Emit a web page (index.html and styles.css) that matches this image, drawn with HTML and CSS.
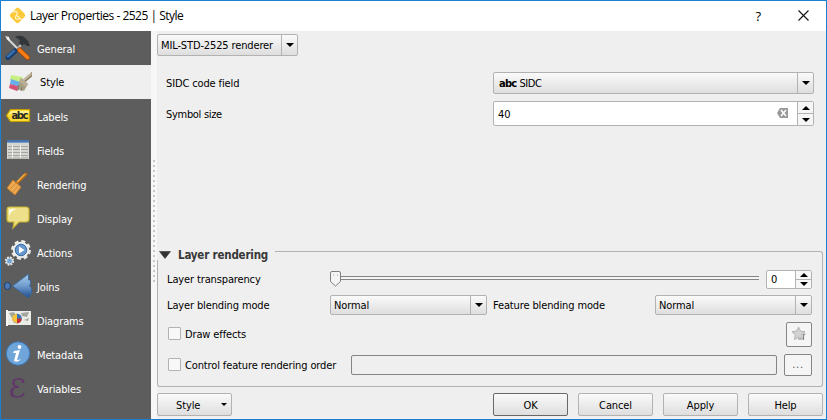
FILE: index.html
```
<!DOCTYPE html>
<html lang="en">
<head>
<meta charset="utf-8">
<title>Layer Properties</title>
<link rel="stylesheet" href="styles.css">
</head>
<body>
<div class="window">
  <header class="titlebar">
    <svg class="logo" width="17" height="17" viewBox="0 0 17 17"><path d="M8.500 0.500Q10 0.500 11 2L15.500 6.500Q17 8.500 15.500 10L10 15.500Q8.500 17 7 15.500L1.500 10Q0 8.500 1.500 7L7 1.500Z" fill="#fcc938"/><path d="M4 5.500Q5.500 3.500 8 5Q9 7 7 9Q5.500 11 7.500 12Q10 12.500 11.500 11M7 9Q9 8.500 10 10.500Q11.500 13 13.500 12" fill="none" stroke="#fff4d2" stroke-width="1.200"/></svg>
    <span class="caption">Layer Properties - 2525 | Style</span>
    <span class="help">?</span>
    <svg class="close" width="11" height="11" viewBox="0 0 11 11"><path d="M.5.500 10.500 10.500M10.500.5.500 10.500" stroke="#111" stroke-width="1.100"/></svg>
  </header>
  <div class="body">
    <nav class="sidebar">
      <div class="item"><svg viewBox="0 0 32 34"><path d="M7 7 18 18" stroke="#d5d8da" stroke-width="2"/><path d="m5 5 4 1 1 4-2-1z" fill="#eee"/><path d="M24 11 10 25" stroke="#b9c0c4" stroke-width="2.200"/><path d="M15 6Q20 3.500 24 6L28 10 30 15 27 15 24 13 22 15 19 12 20 9Z" fill="#30363a"/><path d="M15 20 8 26.500" stroke="#123b70" stroke-width="5" stroke-linecap="round"/><path d="M14 20 8 25.500" stroke="#366eaf" stroke-width="2.600" stroke-linecap="round"/><path d="m19.500 19 8 7.500" stroke="#a94500" stroke-width="5" stroke-linecap="round"/><path d="m19.500 19 8 7.500" stroke="#f77e17" stroke-width="3.400" stroke-linecap="round"/></svg><span>General</span></div>
      <div class="item selected"><svg viewBox="0 0 32 34"><path d="m11 10 12 2-2 7-11-4z" fill="#c9ef83"/><path d="m11 14 12 4-3 4-10-3z" fill="#65aeea"/><path d="m10 19 11 3-4 4-8-3z" fill="#d75278"/><path d="m24 16 8-7" stroke="#8c8065" stroke-width="3.600" stroke-linecap="round"/><path d="m24 15 7-6" stroke="#c7baa0" stroke-width="1.800" stroke-linecap="round"/><path d="m21 13 7 6-4 7-7-2z" fill="#a5a186"/><path d="m21 13 7 6-2 3-7-6z" fill="#b9ad95"/><path d="m19 20-1 5m4-3-1 4" stroke="#77745f"/></svg><span>Style</span></div>
      <div class="item"><svg viewBox="0 0 32 34"><path d="m6.500 16.500 4-6h19v12h-19z" fill="#f9dc37" stroke="#c69d00" stroke-width="1.200"/><path d="m8 16 3-4h18v3H10z" fill="#fff08b"/><text x="11.500" y="20" class="tagtext" textLength="17">abc</text></svg><span>Labels</span></div>
      <div class="item"><svg viewBox="0 0 32 34"><path d="M7 7h22v19H7z" fill="#d5d6d2"/><path d="M7 7h22v3H7z" fill="#4775b2"/><path d="M7 9h22v1H7z" fill="#749ccc"/><path d="M8 13.500h20M8 16.500h20M8 19.500h20M8 22.500h20M8 25h20" stroke="#a4a5a1"/><path d="M12.500 12v13M20.500 12v13" stroke="#eeeeea"/></svg><span>Fields</span></div>
      <div class="item"><svg viewBox="0 0 32 34"><path d="m17 16 9-9" stroke="#b86c16" stroke-width="3" stroke-linecap="round"/><path d="m17 15 8-8" stroke="#f1ab46" stroke-width="1.600"/><path d="m13 13 8 7-6 8-8-7z" fill="#eda94f" stroke="#c47a28"/><path d="m10 22 6-6m-3 9 6-7" stroke="#d18b3a"/></svg><span>Rendering</span></div>
      <div class="item"><svg viewBox="0 0 32 34"><path d="M9 6h17q3 0 3 3v9q0 3-3 3h-7l-6 6 1-6H9q-2 0-2-3V9q0-3 2-3z" fill="#eee08a" stroke="#c8b32f" stroke-width="1.200"/><path d="M9 15V9q2-2 8-1Q11 9 9 15z" fill="#fffbea"/></svg><span>Display</span></div>
      <div class="item"><svg viewBox="0 0 32 34"><circle cx="21" cy="15" r="8.700" fill="none" stroke="#e9e9e5" stroke-width="2.500" stroke-dasharray="4 2.830"/><circle cx="21" cy="15" r="7" fill="#6498cf" stroke="#eee" stroke-width="2.400"/><circle cx="21" cy="15" r="5.800" fill="none" stroke="#3769a2"/><path d="m19 11.500 5.500 3.500-5.500 3.500z" fill="#fff"/><circle cx="9.500" cy="26" r="3.800" fill="none" stroke="#eeeeea" stroke-width="1.700" stroke-dasharray="1.800 1.180"/><circle cx="9.500" cy="26" r="3" fill="#74a5d6" stroke="#e1e4e4"/></svg><span>Actions</span></div>
      <div class="item"><svg viewBox="0 0 32 34"><defs><linearGradient id="join" x2="0" y2="1"><stop stop-color="#aaceec"/><stop offset=".5" stop-color="#6f9bcd"/><stop offset="1" stop-color="#1e4b8c"/></linearGradient></defs><path d="m12.500 17 16-12v6h2v4l-1 2 2 2v5l-2 3-1 2z" fill="url(#join)" stroke="#31669f" stroke-width=".8"/><ellipse cx="7.500" cy="17" rx="3" ry="3.500" fill="#4d79b8" stroke="#174376"/></svg><span>Joins</span></div>
      <div class="item"><svg viewBox="0 0 32 34"><path d="M6 7h2v16H6z" fill="#f5f5f3"/><path d="M8 8h23v14H8z" fill="#ecece7"/><path d="m9 10 5-1 2 4-4 2zm12 0 8-1-2 5-5-1zm3 7 5-2-1 3z" fill="#a2a69f"/><circle cx="17" cy="15.500" r="4.800" fill="#3976b5"/><path d="M17 15.500V20.500q5-1 4.500-5z" fill="#cb2e2e"/><path d="M17 10.700v9.600q-5-1-5-5t5-4.600z" fill="#f4c53c"/></svg><span>Diagrams</span></div>
      <div class="item"><svg viewBox="0 0 32 34"><circle cx="18" cy="16.500" r="11.700" fill="#70a5da" stroke="#3779bd"/><circle cx="19.500" cy="10" r="1.900" fill="#fff"/><path d="m14 14 6-1-3 10q2 0 4-1-3 4-7 2l2-8-3 0z" fill="#fff"/></svg><span>Metadata</span></div>
      <div class="item"><svg viewBox="0 0 32 34"><path d="M23 10Q22 7.500 18 8q-5 .5-5 4t6 4q-8 0-8 5 0 5 6 5t7-4M14 9q-1 3 1 6m-2 3q-2 4 1 7" fill="none" stroke="#61366b" stroke-width="1.700"/><circle cx="23" cy="10.500" r="1.600" fill="#61366b"/></svg><span>Variables</span></div>
    </nav>
    <div class="splitter"><i class="dots"></i></div>
    <main class="panel">
      <div class="combo renderer"><span>MIL-STD-2525 renderer</span><b class="arrowbox"><i class="down"></i></b></div>
      <div class="row sidc"><label>SIDC code field</label><div class="combo"><strong>abc</strong><span>SIDC</span><b class="arrowbox"><i class="down"></i></b></div></div>
      <div class="row size"><label>Symbol size</label><div class="spin"><span>40</span><svg class="clear" width="11" height="10" viewBox="0 0 11 10"><path d="M3 0h8v10H3L0 5z" fill="#999"/><path d="m4 2 5 6m0-6L4 8" stroke="#fff" stroke-width="1.500"/></svg><b class="steps"><u><i class="up"></i></u><u><i class="down"></i></u></b></div></div>
      <section class="group">
        <h2><svg width="12" height="8" viewBox="0 0 12 8"><path d="M.5.500h11L6 7.500z" fill="#333" stroke="#222" stroke-width=".5"/></svg><span>Layer rendering</span></h2>
        <div class="frame">
          <div class="row transparency"><label>Layer transparency</label>
            <div class="slider"><svg class="thumb" width="12" height="16" viewBox="0 0 12 16"><path d="M2 .5h7q1.500 0 1.500 1.500v8.500l-5 4.500-5-4.500V2Q.5.500 2 .5z" fill="#f5f5f5" stroke="#808080"/><path d="M3 4h1m3 0h1" stroke="#aaa"/></svg></div>
            <div class="spin small"><span>0</span><b class="steps"><u><i class="up"></i></u><u><i class="down"></i></u></b></div>
          </div>
          <div class="row blending"><label class="layermode">Layer blending mode</label><div class="combo"><span>Normal</span><b class="arrowbox"><i class="down"></i></b></div><label class="featuremode">Feature blending mode</label><div class="combo"><span>Normal</span><b class="arrowbox"><i class="down"></i></b></div></div>
          <div class="row effects"><i class="check"></i><label>Draw effects</label><button class="tool star"><svg width="16" height="16" viewBox="0 0 16 16"><path d="m7.500 1 2 4.200 4.500.5-3.300 3.200.8 4.600-4-2.200-4 2.200.8-4.600L1 5.700l4.500-.5z" fill="#d2d2d2" stroke="#b4b4b4"/><path d="M12.500 8v6m0-4q0-2 2-2M7 13h3" fill="none" stroke="#888" stroke-width="1.200"/></svg></button></div>
          <div class="row order"><i class="check"></i><label>Control feature rendering order</label><div class="field"></div><button class="tool more">...</button></div>
        </div>
      </section>
      <footer class="buttons"><button class="menu"><span>Style</span><i class="down"></i></button><button class="default">OK</button><button>Cancel</button><button>Apply</button><button>Help</button></footer>
    </main>
  </div>
</div>
</body>
</html>
```
FILE: styles.css
```
* { box-sizing: border-box; }
body { margin: 0; font: 11px/14px "DejaVu Sans Condensed", "DejaVu Sans", sans-serif; font-stretch: condensed; letter-spacing: -.13px; color: #000; }
.window { width: 827px; height: 420px; border: 1px solid #1a80d3; background: #efefef; overflow: hidden; }
.titlebar { height: 30px; background: #fff; display: flex; align-items: center; padding: 0 17px 0 8px; }
.logo { margin-bottom: 2px; }
.caption { margin-left: 4px; font: 12px/16px "Open Sans", "Noto Sans", sans-serif; letter-spacing: -.5px; flex: 1; white-space: nowrap; }
.help { font: 13px/16px "Open Sans", sans-serif; margin-right: 37px; }
.close { margin-bottom: 2px; }
.body { display: flex; height: 388px; }
.sidebar { width: 150px; background: #5d5d5d; color: #fff; }
.item { height: 34px; display: flex; align-items: center; }
.item svg { width: 32px; height: 34px; margin-left: -1px; flex: none; }
.item span { margin: 3px 0 0 5px; }
.selected { background: #efefef; color: #000; }
.selected span { margin: 2px 0 0 8px; }
.tagtext { font: bold 10px "DejaVu Sans", sans-serif; fill: #292929; letter-spacing: 0; }
.splitter { width: 6px; background: #f7f7f7; padding: 129px 0 0 2px; }
.dots { display: block; width: 2px; height: 122px; background: repeating-linear-gradient(#c8c8c8 0 2px, transparent 2px 5px); }
.panel { width: 669px; padding-top: 3px; }
.combo, .spin { display: flex; align-items: center; border: 1px solid #b2b2b2; border-radius: 2px; background: linear-gradient(#fafafa, #dedede); padding-left: 3px; white-space: nowrap; }
.combo { height: 22px; }
.combo span, .spin span { flex: 1; padding-top: 2px; }
.combo strong { font: bold 10px/14px "DejaVu Sans", sans-serif; letter-spacing: -.8px; margin: 1px 3px 0 2px; }
.sidc .combo span { letter-spacing: -.4px; }
.arrowbox { width: 16px; height: 100%; border-left: 1px solid #b2b2b2; display: flex; align-items: center; justify-content: center; }
.down, .up { display: block; width: 0; height: 0; border: 4px solid transparent; }
.down { border-top-color: #000; border-bottom: 0; }
.up { border-bottom-color: #000; border-top: 0; }
.renderer { width: 141px; }
.row { display: flex; align-items: center; }
.row label { white-space: nowrap; padding-top: 2px; }
.sidc { margin: 16px 0 0 9px; }
.size { margin: 7px 0 0 9px; }
.size label { letter-spacing: -.3px; }
.sidc label, .size label { width: 327px; }
.sidc .combo, .size .spin { width: 321px; }
.spin { height: 25px; background: #fff; padding-left: 4px; }
.clear { margin: 0 9px 2px 0; }
.steps { width: 16px; height: 100%; border-left: 1px solid #b2b2b2; background: #f6f6f6; display: flex; flex-direction: column; }
.steps u { flex: 1; display: flex; align-items: center; justify-content: center; }
.steps u + u { border-top: 1px solid #b2b2b2; }
.group { margin-top: 122px; }
.group h2 { margin: 0; height: 12px; font: bold 11.5px/12px "DejaVu Sans Condensed", "DejaVu Sans", sans-serif; font-stretch: condensed; letter-spacing: -.2px; color: #383838; display: flex; align-items: center; padding-left: 2px; }
.group h2 svg { margin-top: 2px; }
.group h2 span { margin: 2px 0 0 7px; width: 90px; white-space: nowrap; }
.group h2::after { content: ""; flex: 1; height: 8px; margin: 0 3px 0 7px; border: solid #b2b2b2; border-width: 1px 1px 0 0; border-top-right-radius: 3px; align-self: flex-end; }
.frame { width: 666px; height: 127px; border: 1px solid #b2b2b2; border-top: 0; border-radius: 0 0 3px 3px; padding: 9px 10px 0 9px; }
.transparency { height: 20px; }
.transparency label, .layermode { width: 163px; }
.slider { width: 430px; height: 20px; display: flex; align-items: center; background: linear-gradient(#858585 0 1px, #f5f5f5 1px 3px, #858585 3px 4px) 0 7px / 100% 4px no-repeat; border-right: 1px solid transparent; }
.thumb { margin-bottom: 1px; }
.small { width: 46px; height: 19px; margin-left: 6px; }
.blending { height: 20px; margin-top: 6px; }
.blending .combo { width: 157px; height: 20px; }
.blending .featuremode { width: 162px; margin-left: 6px; }
.check { width: 13px; height: 13px; border: 1px solid #b2b2b2; border-radius: 1px; background: #f8f8f8; margin: 0 4px 0 1px; }
.effects { height: 26px; margin-top: 6px; }
.effects label { flex: 1; }
.effects .check { margin-bottom: 1px; }
.order { height: 22px; margin-top: 7px; }
.order .check { margin-bottom: 1px; }
.order label { width: 166px; }
.field { width: 426px; height: 20px; border: 1px solid #858585; border-radius: 2px; }
button { font: inherit; letter-spacing: inherit; color: #000; border: 1px solid #b2b2b2; border-radius: 2px; background: linear-gradient(#fafafa, #dedede); width: 75px; height: 23px; padding: 2px 0 0; }
.tool { border-color: #858585; background: #f5f5f5; display: flex; align-items: center; justify-content: center; padding: 0; }
.star { width: 26px; height: 25px; }
.more { width: 28px; height: 22px; margin-left: 7px; color: #555; letter-spacing: .7px; }
.buttons { display: flex; gap: 10px; margin-top: 6px; }
.menu { margin-right: 251px; display: flex; align-items: center; padding: 0 4px 0 18px; justify-content: space-between; }
.menu span { padding-top: 2px; }
.menu .down { border-width: 3px 3px 0; }
.default { border-color: #686868; }
```
